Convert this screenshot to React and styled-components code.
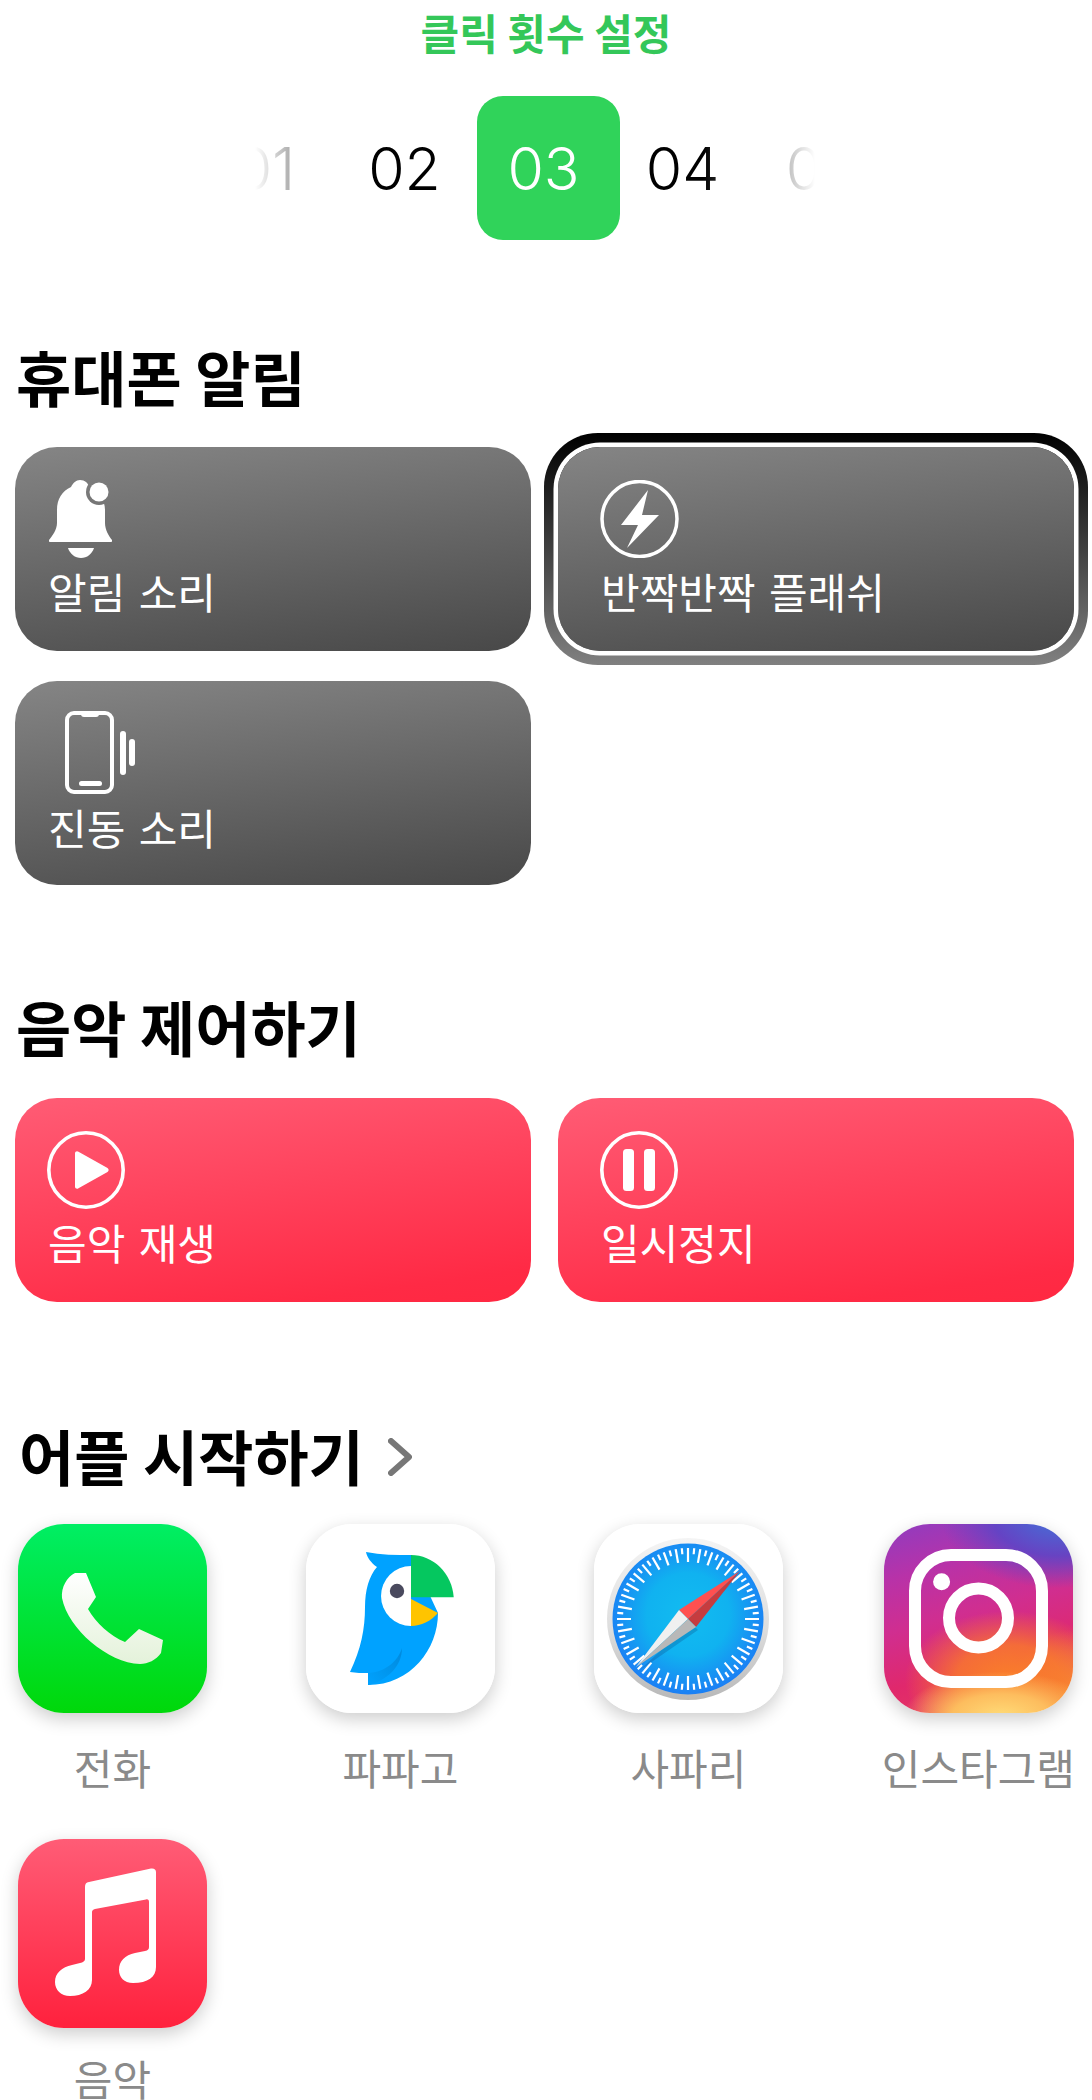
import React from "react";
import styled, { createGlobalStyle } from "styled-components";

const Global = createGlobalStyle`
  html, body { margin: 0; padding: 0; background: #fff; }
  body { font-family: "Noto Sans CJK KR", "Noto Sans", sans-serif; overflow: hidden; }
  * { box-sizing: border-box; }
`;

const Page = styled.div`
  width: 1092px;
  height: 2100px;
  overflow: hidden;
`;

const PickerTitle = styled.div`
  height: 64px;
  line-height: 64px;
  text-align: center;
  font-size: 42px;
  font-weight: 700;
  color: #34c759;
`;

const PickerWindow = styled.div`
  margin: 32px 0 0 255px;
  width: 560px;
  height: 144px;
  overflow: hidden;
  -webkit-mask-image: linear-gradient(90deg, transparent 0, #000 20%, #000 80%, transparent 100%);
  mask-image: linear-gradient(90deg, transparent 0, #000 20%, #000 80%, transparent 100%);
`;

const PickerTrack = styled.div`
  display: flex;
  margin-left: -59px;
  width: 695px;
  height: 144px;
`;

const PickerCell = styled.div`
  position: relative;
  flex: 0 0 139px;
  display: flex;
  align-items: center;
  justify-content: center;
  font-family: Inter, Roboto, "Liberation Sans", sans-serif;
  font-size: 59px;
  font-weight: 350;
  color: ${(p) => (p.$active ? "#fff" : "#000")};
  z-index: 0;
  &::before {
    content: ${(p) => (p.$active ? '""' : "none")};
    position: absolute;
    z-index: -1;
    top: 0;
    bottom: 0;
    left: 3px;
    width: 143px;
    border-radius: 26px;
    background: #30d35a;
  }
`;

const Section = styled.section`
  margin-top: ${(p) => p.$top}px;
`;

const Heading = styled.h2`
  display: flex;
  align-items: center;
  gap: 24px;
  margin: 0 0 ${(p) => p.$gap}px;
  padding-left: ${(p) => p.$left || 16}px;
  height: 70px;
  line-height: 70px;
  font-size: 60px;
  font-weight: 700;
  color: #000;
`;

const CardGrid = styled.div`
  display: grid;
  grid-template-columns: 516px 516px;
  column-gap: 27px;
  row-gap: 30px;
  padding-left: 15px;
`;

const FocusFrame = styled.div`
  position: relative;
  z-index: 0;
  &::before {
    content: "";
    position: absolute;
    z-index: -1;
    inset: -14px;
    border-radius: 54px;
    background: linear-gradient(180deg, #000 0%, #808080 100%);
  }
`;

const Card = styled.div`
  height: 204px;
  padding: 33px 0 0 ${(p) => p.$inset}px;
  border-radius: 42px;
  color: #fff;
  background: ${(p) =>
    p.$tone === "red"
      ? "linear-gradient(172deg, #ff5c75 0%, #ff2a45 88%, #ff2841 100%)"
      : "linear-gradient(173deg, #858585 0%, #484848 100%)"};
  box-shadow: ${(p) => (p.$focused ? "0 0 0 4.5px #fff" : "none")};
`;

const CardGlyph = styled.svg`
  display: block;
  width: ${(p) => p.$w}px;
  height: ${(p) => p.$h}px;
  margin-left: ${(p) => p.$shift || 0}px;
  margin-top: ${(p) => -(p.$lift || 0)}px;
  margin-bottom: ${(p) => p.$lift || 0}px;
`;

const CardLabel = styled.div`
  margin-top: 9px;
  height: 48px;
  line-height: 48px;
  font-size: 42px;
  word-spacing: 4px;
  font-weight: 400;
  white-space: nowrap;
`;

const Chevron = styled.svg`
  display: block;
  width: 24px;
  height: 38px;
  margin-top: 3px;
`;

const AppGrid = styled.div`
  display: grid;
  grid-template-columns: 189px 189px 189px auto;
  justify-content: space-between;
  padding: 0 17px 0 18px;
`;

const AppCell = styled.div`
  display: flex;
  flex-direction: column;
  align-items: center;
  height: 315px;
`;

const AppTile = styled.div`
  width: 189px;
  height: 189px;
  border-radius: 46px;
  overflow: hidden;
  background: ${(p) => p.$bg};
`;

const AppTileShadow = styled.div`
  border-radius: 46px;
  box-shadow: 0 6px 18px rgba(0, 0, 0, 0.2);
`;

const AppArt = styled.svg`
  display: block;
  width: 189px;
  height: 189px;
`;

const AppLabel = styled.div`
  margin-top: ${(p) => p.$gap}px;
  height: 40px;
  line-height: 40px;
  font-size: 42px;
  color: #8a8a8a;
  white-space: nowrap;
`;

const Bell = () => (
  <CardGlyph $w={63} $h={78} $shift={1} viewBox="0 0 63 78">
    <mask id="bellCut">
      <rect width="63" height="78" fill="#fff" />
      <circle cx="50" cy="12" r="13" fill="#000" />
    </mask>
    <path
      mask="url(#bellCut)"
      fill="#fff"
      d="M31 0C36 0 39 3 40 7C50 11 56 20 56 30L56 43C56 50 60 56 63 60C63.5 61.5 63 62 61 62L2 62C0 62-.5 61.5 0 60C3 56 8 50 8 43L8 30C8 19 13 11 22 7C24 3 27 0 31 0Z"
    />
    <circle cx="50" cy="12" r="9.5" fill="#fff" />
    <path fill="#fff" d="M19 68L45 68C43 74 38 78 32 78C26 78 21 74 19 68Z" />
  </CardGlyph>
);

const Flash = () => (
  <CardGlyph $w={79} $h={78} $shift={-1} viewBox="0 0 79 78">
    <circle cx="39.5" cy="39" r="37.5" fill="none" stroke="#fff" strokeWidth="3.5" />
    <path fill="#fff" d="M48 10L21 45L38 45L27 68L59 35L42 35Z" />
  </CardGlyph>
);

const Vibrate = () => (
  <CardGlyph $w={70} $h={83} $shift={17} $lift={3} viewBox="0 0 70 83">
    <rect x="2" y="2" width="45" height="79" rx="7" fill="none" stroke="#fff" strokeWidth="4" />
    <path fill="#fff" d="M16 2L34 2L34 3C34 5 33 6 31 6L19 6C17 6 16 5 16 3Z" />
    <rect x="14" y="70" width="23" height="5" rx="2.5" fill="#fff" />
    <rect x="55" y="20" width="6" height="44" rx="3" fill="#fff" />
    <rect x="64" y="28" width="6" height="27" rx="3" fill="#fff" />
  </CardGlyph>
);

const Play = () => (
  <CardGlyph $w={78} $h={78} $shift={-1} viewBox="0 0 78 78">
    <circle cx="39" cy="39" r="37.2" fill="none" stroke="#fff" strokeWidth="3.6" />
    <path
      fill="#fff"
      d="M28 22.5C28 20.5 30 19.5 31.5 20.8L60.5 37C62 38 62 40 60.5 41L31.5 57.2C30 58.5 28 57.5 28 55.5Z"
    />
  </CardGlyph>
);

const Pause = () => (
  <CardGlyph $w={78} $h={78} $shift={-1} viewBox="0 0 78 78">
    <circle cx="39" cy="39" r="37.2" fill="none" stroke="#fff" strokeWidth="3.6" />
    <rect x="23" y="18" width="11" height="42" rx="3.5" fill="#fff" />
    <rect x="44" y="18" width="11" height="42" rx="3.5" fill="#fff" />
  </CardGlyph>
);

const PhoneArt = () => (
  <AppArt viewBox="0 0 189 189">
    <defs>
      <linearGradient id="handset" x1="0" y1="0" x2="0" y2="1">
        <stop offset="0" stopColor="#fff" />
        <stop offset="1" stopColor="#e4f2da" />
      </linearGradient>
    </defs>
    <path
      fill="url(#handset)"
      d="M57 49L68 49L78 73L70 85C78 99 92 112 107 118L121 105L145 116L143 129C138 136 130 140 122 140C90 139 50 105 44 74C43 63 49 53 57 49Z"
    />
  </AppArt>
);

const PapagoArt = () => (
  <AppArt viewBox="0 0 189 189">
    <defs>
      <linearGradient id="wing" x1="1" y1="0" x2="0" y2="1">
        <stop offset="0" stopColor="#0089dc" />
        <stop offset="1" stopColor="#00a2ff" />
      </linearGradient>
    </defs>
    <path
      fill="#00a2ff"
      d="M60 28C75 31 90 31 105 31L132 89C132 125 105 161 62 161L62 149C56 149 50 149 44 148C55 125 59 105 59 83C59 66 63 52 71 43C65 39 61 33 60 28Z"
    />
    <path fill="url(#wing)" d="M96 124C96 143 80 157 62 161L62 149C80 148 92 137 96 124Z" />
    <path fill="#fff" d="M105 42A30 30 0 0 0 105 102Z" />
    <circle cx="91" cy="67" r="7.2" fill="#4a4a5e" />
    <path fill="#05c75f" d="M105 31C127 31 146 49 147.7 73.3L105 73.3Z" />
    <path fill="#ffc400" d="M105 75L132 89C125 97 115 102 105 102Z" />
  </AppArt>
);

const TICKS = Array.from({ length: 72 }, (_, i) => i * 5);

const SafariArt = () => (
  <AppArt viewBox="0 0 189 189">
    <defs>
      <linearGradient id="sfRing" x1="0" y1="0" x2="0" y2="1">
        <stop offset="0" stopColor="#f4f4f4" />
        <stop offset="0.55" stopColor="#dedede" />
        <stop offset="1" stopColor="#b8b8b8" />
      </linearGradient>
      <radialGradient id="sfFace" cx="0.5" cy="0.47" r="0.55">
        <stop offset="0" stopColor="#12bcf0" />
        <stop offset="0.5" stopColor="#10b2f0" />
        <stop offset="1" stopColor="#1c7bf5" />
      </radialGradient>
    </defs>
    <circle cx="94" cy="95" r="81" fill="url(#sfRing)" />
    <circle cx="94" cy="95" r="75.5" fill="url(#sfFace)" />
    {TICKS.map((deg) => (
      <line
        key={deg}
        x1="94"
        x2="94"
        y1="24"
        y2={deg % 10 === 0 ? 38 : 30}
        stroke="#fff"
        strokeWidth="2.2"
        transform={`rotate(${deg} 94 95)`}
      />
    ))}
    <path fill="#0a3c78" opacity="0.25" d="M148 50L96 98L104 106L46 146Z" />
    <path fill="#ff5050" d="M146 47L85 86L94 95Z" />
    <path fill="#c63c3f" d="M146 47L94 95L102 103Z" />
    <path fill="#f0f0f0" d="M42 143L85 86L94 95Z" />
    <path fill="#b8b8b8" d="M42 143L94 95L102 103Z" />
  </AppArt>
);

const InstaArt = () => (
  <AppArt viewBox="0 0 189 189">
    <rect x="31" y="31" width="127" height="127" rx="36" fill="none" stroke="#fff" strokeWidth="12" />
    <circle cx="94.5" cy="94" r="29.5" fill="none" stroke="#fff" strokeWidth="12" />
    <circle cx="57.6" cy="57.7" r="8.5" fill="#fff" />
  </AppArt>
);

const MusicArt = () => (
  <AppArt viewBox="0 0 189 189">
    <path
      fill="#fff"
      d="M67 48C67 45 68 43.5 71 43L133 29.5C136 29 138 30.5 138 33L138 128C138 138 130 144 115 144C106 144 101 138 101 131C101 122 107 116 117 114L127 112C130 111.5 131 110 131 108L131 63C131 61 130 60 128 60.5L77 70C75 70.5 74 71.5 74 73L74 141C74 151 65 157 52 157C43 157 37 151 37 143C37 134 44 128 54 126L62 124C65 123.5 67 122 67 120Z"
    />
  </AppArt>
);

const instaBg = `
  radial-gradient(ellipse 52% 24% at 62% 102%, #ffdc78 0%, #fdbd5e 50%, rgba(252,160,70,0) 100%),
  radial-gradient(ellipse 55% 36% at 66% 82%, #fa7e2a 0%, rgba(250,125,42,.8) 50%, rgba(240,90,80,0) 100%),
  radial-gradient(ellipse 34% 34% at 100% 90%, #f49a3a 0%, rgba(244,150,60,0) 100%),
  radial-gradient(ellipse 62% 38% at 92% -4%, #4272d8 0%, rgba(88,70,200,.85) 55%, rgba(110,60,190,0) 100%),
  linear-gradient(165deg, #8f3cc0 0%, #b832a8 24%, #d02e90 46%, #e0286c 70%, #e8405a 100%)
`;

const apps = [
  { name: "전화", bg: "linear-gradient(180deg, #00ee64 0%, #00d80a 100%)", Art: PhoneArt, gap: 34 },
  { name: "파파고", bg: "#fff", Art: PapagoArt, gap: 34 },
  { name: "사파리", bg: "#fff", Art: SafariArt, gap: 34 },
  { name: "인스타그램", bg: instaBg, Art: InstaArt, gap: 34 },
  { name: "음악", bg: "linear-gradient(180deg, #ff5c76 0%, #ff213d 100%)", Art: MusicArt, gap: 30 },
];

export default function App() {
  return (
    <Page>
      <Global />
      <PickerTitle>클릭 횟수 설정</PickerTitle>
      <PickerWindow>
        <PickerTrack>
          {["01", "02", "03", "04", "05"].map((n) => (
            <PickerCell key={n} $active={n === "03"}>
              {n}
            </PickerCell>
          ))}
        </PickerTrack>
      </PickerWindow>

      <Section $top={101}>
        <Heading $gap={36}>휴대폰 알림</Heading>
        <CardGrid>
          <Card $inset={33}>
            <Bell />
            <CardLabel>알림 소리</CardLabel>
          </Card>
          <FocusFrame>
            <Card $inset={43} $focused>
              <Flash />
              <CardLabel>반짝반짝 플래쉬</CardLabel>
            </Card>
          </FocusFrame>
          <Card $inset={33}>
            <Vibrate />
            <CardLabel>진동 소리</CardLabel>
          </Card>
        </CardGrid>
      </Section>

      <Section $top={106}>
        <Heading $gap={37}>음악 제어하기</Heading>
        <CardGrid>
          <Card $inset={33} $tone="red">
            <Play />
            <CardLabel>음악 재생</CardLabel>
          </Card>
          <Card $inset={43} $tone="red">
            <Pause />
            <CardLabel>일시정지</CardLabel>
          </Card>
        </CardGrid>
      </Section>

      <Section $top={118}>
        <Heading $gap={34} $left={19}>
          어플 시작하기
          <Chevron viewBox="0 0 24 38">
            <path d="M3 3L21 19L3 35" fill="none" stroke="#777" strokeWidth="6" strokeLinecap="round" strokeLinejoin="round" />
          </Chevron>
        </Heading>
        <AppGrid>
          {apps.map(({ name, bg, Art, gap }) => (
            <AppCell key={name}>
              <AppTileShadow>
                <AppTile $bg={bg}>
                  <Art />
                </AppTile>
              </AppTileShadow>
              <AppLabel $gap={gap}>{name}</AppLabel>
            </AppCell>
          ))}
        </AppGrid>
      </Section>
    </Page>
  );
}
